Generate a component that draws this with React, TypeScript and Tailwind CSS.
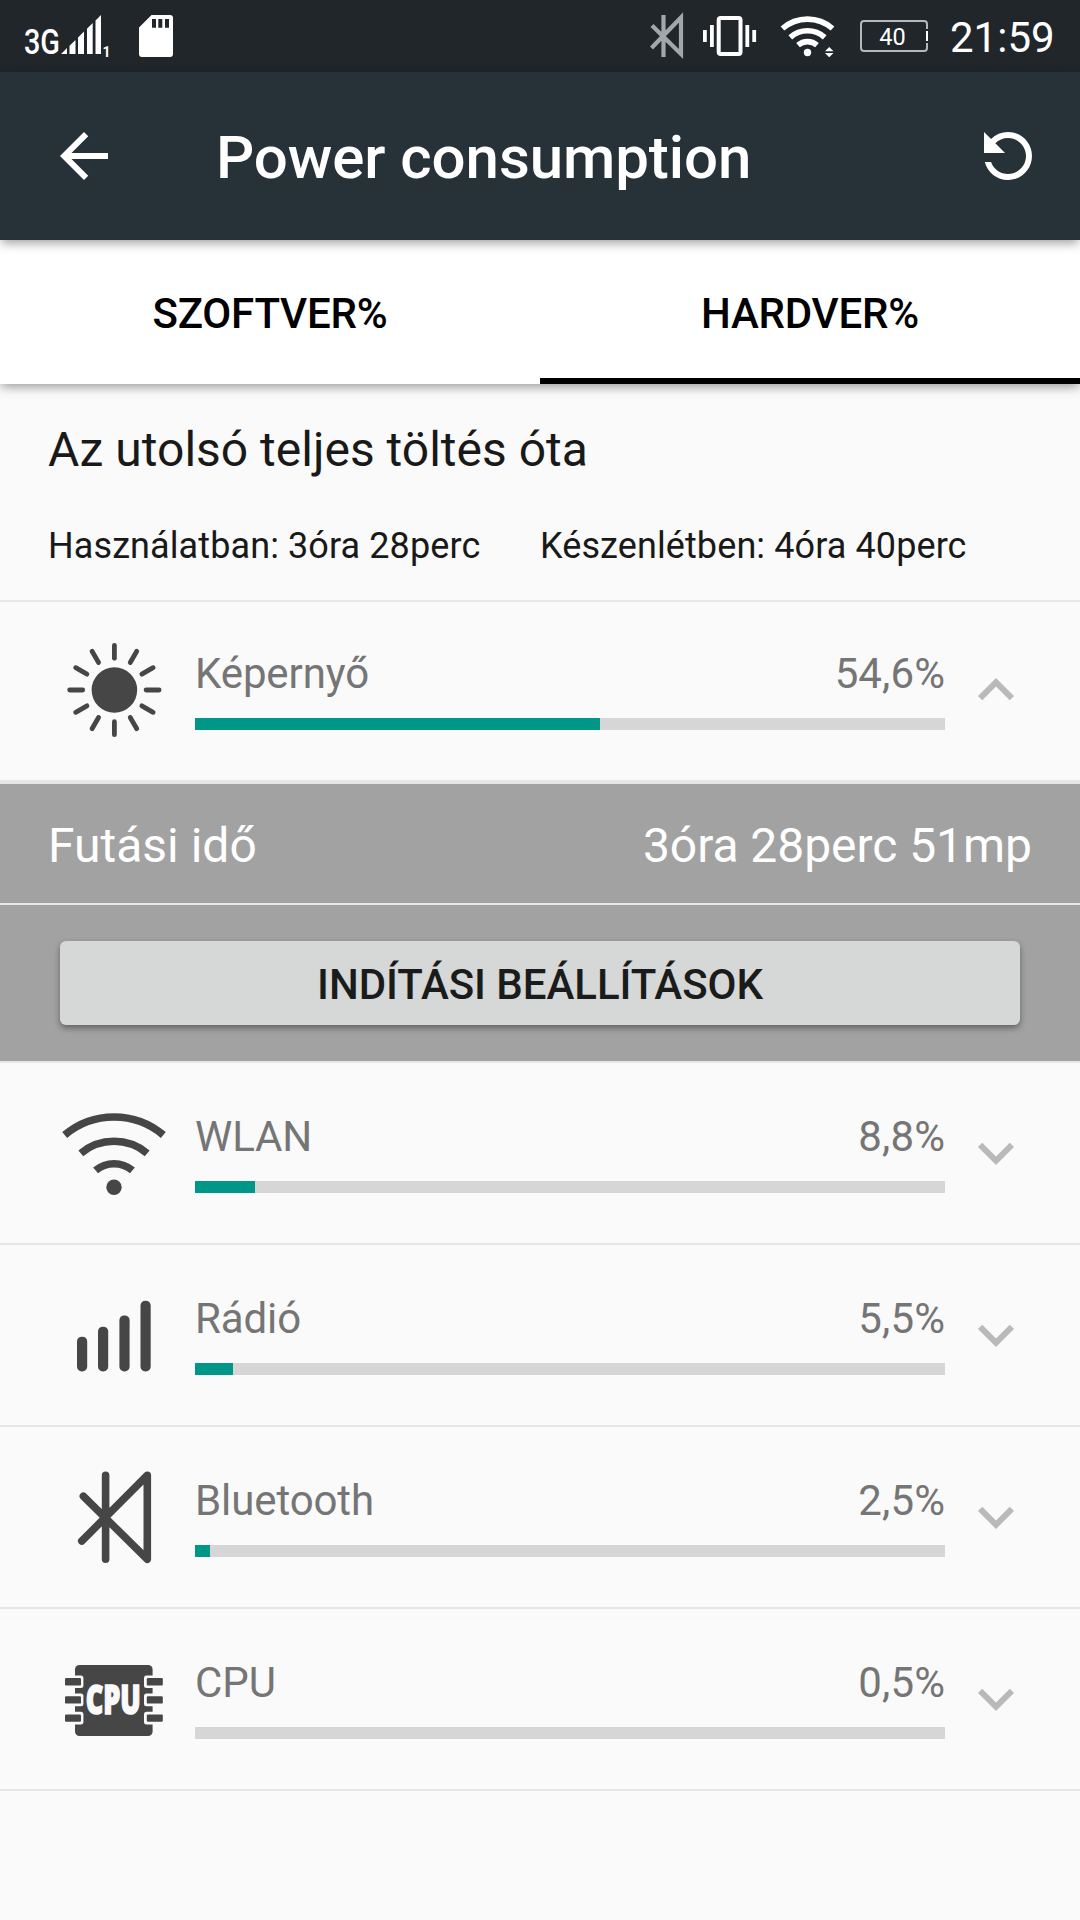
import { ReactNode, useState } from "react";
import { MdArrowBack, MdExpandLess, MdExpandMore, MdRefresh } from "react-icons/md";

const RAY_ANGLES = [0, 30, 60, 90, 120, 150, 180, 210, 240, 270, 300, 330];
const PIN_ROWS = [33, 51.2, 69.4];

function RowIcon({ children }: { children: ReactNode }) {
  return (
    <svg
      viewBox="0 0 108 108"
      className="h-[108px] w-[108px] shrink-0 text-[#464646]"
      fill="none"
      stroke="currentColor"
    >
      {children}
    </svg>
  );
}

function ScreenIcon() {
  return (
    <RowIcon>
      <circle cx="54.4" cy="54" r="22.8" fill="currentColor" stroke="none" />
      {RAY_ANGLES.map((angle) => (
        <line
          key={angle}
          x1="54.4"
          y1="22.3"
          x2="54.4"
          y2="9.3"
          strokeWidth="4.8"
          strokeLinecap="round"
          transform={`rotate(${angle} 54.4 54)`}
        />
      ))}
    </RowIcon>
  );
}

function WlanIcon() {
  return (
    <RowIcon>
      <g strokeWidth="7.6">
        <path d="M4.7 36A76.5 76.5 0 0 1 103.3 36" />
        <path d="M20.8 54.3A52 52 0 0 1 87.2 54.3" />
        <path d="M35.6 71.4A28.6 28.6 0 0 1 72.4 71.4" />
      </g>
      <circle cx="54" cy="88.3" r="7.7" fill="currentColor" stroke="none" />
    </RowIcon>
  );
}

function RadioIcon() {
  return (
    <RowIcon>
      <g fill="currentColor" stroke="none">
        <rect x="17" y="55.700" width="10.2" height="34.800" rx="4.8" />
        <rect x="38" y="45.700" width="10.2" height="44.800" rx="4.8" />
        <rect x="59.4" y="34.4" width="10.2" height="56.1" rx="4.8" />
        <rect x="80.5" y="19.800" width="10.2" height="70.700" rx="4.8" />
      </g>
    </RowIcon>
  );
}

function BluetoothIcon() {
  return (
    <RowIcon>
      <path
        d="M45.6 12.3V96.3M23.4 33.2L87.3 96.3V12.3L21.8 78"
        strokeWidth="7.6"
        strokeLinecap="round"
        strokeLinejoin="round"
      />
    </RowIcon>
  );
}

function CpuIcon() {
  return (
    <RowIcon>
      <rect x="15" y="20" width="77.6" height="71" rx="4.5" fill="currentColor" stroke="none" />
      {PIN_ROWS.map((y) => (
        <g key={y} stroke="none">
          <rect x="3" y={y - 2.6} width="20.4" height="12.6" rx="2.5" fill="#fafafa" />
          <rect x="84" y={y - 2.6} width="20.4" height="12.6" rx="2.5" fill="#fafafa" />
          <rect x="5" y={y} width="16" height="7.4" rx="1.2" fill="currentColor" />
          <rect x="86.8" y={y} width="16" height="7.4" rx="1.2" fill="currentColor" />
        </g>
      ))}
      <text
        x="0"
        y="0"
        textAnchor="middle"
        transform="translate(53.2 69.2) scale(1 1.480)"
        fill="#fafafa"
        stroke="#fafafa"
        strokeWidth="1.4"
        vectorEffect="non-scaling-stroke"
        className="font-['Open_Sans','Noto_Sans',sans-serif] text-[27px] font-extrabold"
      >
        CPU
      </text>
    </RowIcon>
  );
}

type Consumer = {
  name: string;
  percent: string;
  progress: number;
  icon: ReactNode;
};

const consumers: Consumer[] = [
  { name: "Képernyő", percent: "54,6%", progress: 54, icon: <ScreenIcon /> },
  { name: "WLAN", percent: "8,8%", progress: 8, icon: <WlanIcon /> },
  { name: "Rádió", percent: "5,5%", progress: 5, icon: <RadioIcon /> },
  { name: "Bluetooth", percent: "2,5%", progress: 2, icon: <BluetoothIcon /> },
  { name: "CPU", percent: "0,5%", progress: 0, icon: <CpuIcon /> },
];

function StatusBar() {
  return (
    <div className="flex h-[72px] items-center bg-[#20262a] px-[24px] text-white">
      <svg viewBox="24 0 88 72" className="h-[72px] w-[88px]" fill="currentColor">
        <text
          x="24"
          y="54"
          textLength="36"
          lengthAdjust="spacingAndGlyphs"
          className="text-[35px] font-medium"
        >
          3G
        </text>
        <path d="M61 54L67 48V54ZM69.5 54V45.7L75.5 40V54ZM78 54V37.5L84 31.6V54ZM87 54V28.7L92.7 23V54ZM95.5 54V20.4L101 15V54Z" />
        <text x="102.5" y="57" className="text-[14px] font-bold">
          1
        </text>
      </svg>
      <svg viewBox="139 15 34 42" className="ml-[27px] h-[42px] w-[34px]">
        <path
          fill="currentColor"
          fillRule="evenodd"
          d="M151.5 15H170a3 3 0 0 1 3 3V54a3 3 0 0 1-3 3H142a3 3 0 0 1-3-3V27.5ZM152 19V27.7H156V19ZM158.3 19V27.7H162.3V19ZM165 19V27.7H169V19Z"
        />
      </svg>

      <div className="ml-auto flex items-center">
        <svg viewBox="650 0 34 72" className="h-[72px] w-[34px] text-[#a4a7a9]">
          <path
            d="M663.5 15V57M652 25.5L681 54V17.5L651.5 48"
            fill="none"
            stroke="currentColor"
            strokeWidth="4.2"
          />
        </svg>
        <svg viewBox="702 0 56 72" className="ml-[18px] h-[72px] w-[56px]" fill="currentColor">
          <rect x="718.7" y="18" width="21.8" height="36" rx="2" fill="none" stroke="currentColor" strokeWidth="4" />
          <path d="M710 25h3.8v22H710zM703 30h3.8v12H703zM745.4 25h3.8v22h-3.8zM752.3 30h3.8v12h-3.8z" />
        </svg>
        <svg viewBox="780 0 56 72" className="ml-[22px] h-[72px] w-[56px]" fill="none">
          <g stroke="currentColor" strokeWidth="5.6">
            <path d="M782.5 28.5A38 38 0 0 1 832.5 28.5" />
            <path d="M790.3 37.3A26 26 0 0 1 824.7 37.3" />
            <path d="M798 45.2A14.5 14.5 0 0 1 817 45.2" />
          </g>
          <circle cx="807.5" cy="52.5" r="3.7" fill="currentColor" />
          <path d="M829.2 47L833.5 51.3H825ZM829.2 57.3L833.5 53H825Z" fill="currentColor" />
        </svg>
        <div className="relative ml-[24px] flex h-[32px] w-[68px] items-center justify-center rounded-[4px] border-2 border-[#b5b8ba] pt-[2px] pr-[3px] text-[23.5px] leading-[28px]">
          40
          <span className="absolute top-[7px] -right-[2px] h-[14px] w-[2px] border-y-2 border-[#20262a] bg-white" />
        </div>
        <span className="ml-[22px] w-[106px] pt-[3px] text-[42px] leading-[48px]">21:59</span>
      </div>
    </div>
  );
}

function Toolbar() {
  return (
    <header className="relative z-20 flex h-[168px] items-center bg-[#263238] px-[36px] text-white shadow-[0_4px_10px_-1px_rgba(0,0,0,0.38)]">
      <button className="ml-[12px]">
        <MdArrowBack className="size-[72px]" />
      </button>
      <h1 className="ml-[96px] pt-[4px] text-[60px] leading-[72px] font-medium tracking-[-0.07px]">
        Power consumption
      </h1>
      <button className="ml-auto">
        <MdRefresh className="size-[72px] -scale-x-100" />
      </button>
    </header>
  );
}

function Tab({ label, active }: { label: string; active?: boolean }) {
  return (
    <button
      className={`flex flex-1 items-center justify-center border-b-[6px] pt-[10px] text-[42px] leading-[48px] font-medium tracking-[-0.2px] text-black ${
        active ? "border-black" : "border-white"
      }`}
    >
      {label}
    </button>
  );
}

function ConsumerRow({
  consumer,
  expanded,
  onToggle,
}: {
  consumer: Consumer;
  expanded: boolean;
  onToggle: () => void;
}) {
  const Chevron = expanded ? MdExpandLess : MdExpandMore;

  return (
    <div className="flex h-[180px] items-center pr-[48px] pl-[60px]" onClick={onToggle}>
      {consumer.icon}
      <div className="ml-[27px] flex-1">
        <div className="flex justify-between text-[42px] leading-[48px] text-[#757575]">
          <span className="tracking-[-0.1px]">{consumer.name}</span>
          <span className="tracking-[0.1px]">{consumer.percent}</span>
        </div>
        <div className="mt-[20px] h-[12px] bg-[#d6d6d6]">
          <div className="h-full bg-[#009688]" style={{ width: `${consumer.progress}%` }} />
        </div>
      </div>
      <Chevron className="ml-[15px] size-[72px] text-[#b9b9b9]" />
    </div>
  );
}

function RuntimeDetails() {
  return (
    <div className="border-t-4 border-[#e6e6e6] bg-[#a2a2a2]">
      <div className="flex h-[119px] items-center justify-between px-[48px] pt-[4px] text-[48px] leading-[56px] text-white">
        <span>Futási idő</span>
        <span className="tracking-[-0.05px]">3óra 28perc 51mp</span>
      </div>
      <div className="border-t-2 border-[#e6e6e6] px-[60px] py-[36px]">
        <button className="flex h-[84px] w-full items-center justify-center rounded-[6px] bg-[#d6d7d7] pt-[4px] text-[42px] leading-[48px] font-medium tracking-[-0.05px] text-[#1a1c1c] shadow-[0_3px_6px_rgba(0,0,0,0.4)]">
          INDÍTÁSI BEÁLLÍTÁSOK
        </button>
      </div>
    </div>
  );
}

export default function App() {
  const [expanded, setExpanded] = useState("Képernyő");

  return (
    <div className="h-[1920px] w-[1080px] overflow-hidden bg-[#fafafa] font-['Roboto',sans-serif]">
      <StatusBar />
      <Toolbar />
      <nav className="relative z-10 flex h-[144px] bg-white shadow-[0_4px_10px_-1px_rgba(0,0,0,0.38)]">
        <Tab label="SZOFTVER%" />
        <Tab label="HARDVER%" active />
      </nav>

      <section className="h-[216px] px-[48px] pt-[38px] text-[#191919]">
        <h2 className="text-[48px] leading-[56px]">Az utolsó teljes töltés óta</h2>
        <div className="mt-[47px] grid grid-cols-2 text-[36px] leading-[42px] tracking-[0.1px]">
          <span>Használatban: 3óra 28perc</span>
          <span>Készenlétben: 4óra 40perc</span>
        </div>
      </section>

      <main>
        {consumers.map((consumer, index) => {
          const isExpanded = consumer.name === expanded;
          return (
            <div
              key={consumer.name}
              className={
                index === 0
                  ? "border-b-2 border-[#e6e6e6] shadow-[inset_0_2px_0_#e6e6e6]"
                  : "border-b-2 border-[#e6e6e6]"
              }
            >
              <ConsumerRow
                consumer={consumer}
                expanded={isExpanded}
                onToggle={() => setExpanded(isExpanded ? "" : consumer.name)}
              />
              {isExpanded && <RuntimeDetails />}
            </div>
          );
        })}
      </main>
    </div>
  );
}
